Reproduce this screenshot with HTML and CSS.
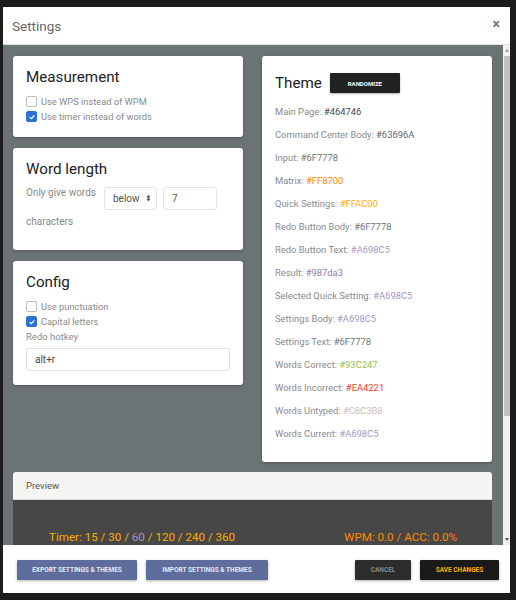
FILE: index.html
```html
<!DOCTYPE html>
<html>
<head>
<meta charset="utf-8">
<link rel="stylesheet" href="styles.css">
</head>
<body>
<div class="modal">
  <div class="header">
    <span class="title">Settings</span>
    <span class="close">×</span>
  </div>
  <div class="body-wrap">
    <div class="scroll">
      <div class="grid">
        <div class="col">
          <div class="card measure">
            <h2>Measurement</h2>
            <div class="check"><span class="box"></span>Use WPS instead of WPM</div>
            <div class="check"><span class="box on"><svg viewBox="0 0 10 10" width="8" height="8"><path d="M2 5.2 L4.2 7.2 L8 3" fill="none" stroke="#fff" stroke-width="1.5"/></svg></span>Use timer instead of words</div>
          </div>
          <div class="card wordlen">
            <h2>Word length</h2>
            <div class="wl-row">
              <span class="lbl">Only give words</span>
              <span class="select">below <span class="arrows">⬍</span></span>
              <span class="num">7</span>
            </div>
            <div class="lbl chars">characters</div>
          </div>
          <div class="card config">
            <h2>Config</h2>
            <div class="check"><span class="box"></span>Use punctuation</div>
            <div class="check"><span class="box on"><svg viewBox="0 0 10 10" width="8" height="8"><path d="M2 5.2 L4.2 7.2 L8 3" fill="none" stroke="#fff" stroke-width="1.5"/></svg></span>Capital letters</div>
            <div class="lbl hot">Redo hotkey</div>
            <div class="field">alt+r</div>
          </div>
        </div>
        <div class="col">
          <div class="card theme">
            <div class="theme-head">
              <h2>Theme</h2>
              <span class="rand">RANDOMIZE</span>
            </div>
            <div class="row">Main Page: <span style="color:#464746">#464746</span></div>
            <div class="row">Command Center Body: <span style="color:#63696A">#63696A</span></div>
            <div class="row">Input: <span style="color:#6F7778">#6F7778</span></div>
            <div class="row">Matrix: <span style="color:#FF8700">#FF8700</span></div>
            <div class="row">Quick Settings: <span style="color:#FFAC00">#FFAC00</span></div>
            <div class="row">Redo Button Body: <span style="color:#6F7778">#6F7778</span></div>
            <div class="row">Redo Button Text: <span style="color:#A698C5">#A698C5</span></div>
            <div class="row">Result: <span style="color:#987da3">#987da3</span></div>
            <div class="row">Selected Quick Setting: <span style="color:#A698C5">#A698C5</span></div>
            <div class="row">Settings Body: <span style="color:#A698C5">#A698C5</span></div>
            <div class="row">Settings Text: <span style="color:#6F7778">#6F7778</span></div>
            <div class="row">Words Correct: <span style="color:#93C247">#93C247</span></div>
            <div class="row">Words Incorrect: <span style="color:#EA4221">#EA4221</span></div>
            <div class="row">Words Untyped: <span style="color:#C8C3B8">#C8C3B8</span></div>
            <div class="row">Words Current: <span style="color:#A698C5">#A698C5</span></div>
          </div>
        </div>
      </div>
      <div class="preview">
        <div class="preview-head">Preview</div>
        <div class="preview-body">
          <span class="timer">Timer: 15 / 30 / <span class="sel">60</span> / 120 / 240 / 360</span>
          <span class="wpm">WPM: 0.0 / ACC: 0.0%</span>
        </div>
      </div>
    </div>
    <div class="scrollbar">
      <span class="arr up"></span>
      <span class="thumb"></span>
      <span class="arr down"></span>
    </div>
  </div>
  <div class="footer">
    <div class="group">
      <span class="btn blue w1">EXPORT SETTINGS &amp; THEMES</span>
      <span class="btn blue w2">IMPORT SETTINGS &amp; THEMES</span>
    </div>
    <div class="group">
      <span class="btn cancel">CANCEL</span>
      <span class="btn save">SAVE CHANGES</span>
    </div>
  </div>
</div>
</body>
</html>
```
FILE: styles.css
```css
* { box-sizing: border-box; }
html, body { height: 100%; }
body {
  margin: 0;
  background: #1c1c1c;
  padding: 7px 6px 0 3px;
  font-family: Roboto, "Liberation Sans", sans-serif;
  overflow: hidden;
}
.modal {
  width: 507px;
  height: 586px;
  background: #fff;
  display: flex;
  flex-direction: column;
}
.header {
  height: 38px;
  flex: none;
  display: flex;
  align-items: center;
  justify-content: space-between;
  padding: 1px 10px 0 9px;
  border-bottom: 1px solid #e2e2e2;
}
.title { font-size: 13.5px; color: #666; }
.close { font-size: 14px; color: #777; font-weight: bold; margin-top: -4px; }
.body-wrap {
  display: flex;
  height: 500px;
  flex: none;
}
.scroll {
  width: 500px;
  background: #6c7374;
  overflow: hidden;
  padding: 11px 11px 0 10px;
}
.grid {
  display: grid;
  grid-template-columns: 230px 230px;
  column-gap: 19px;
}
.col { display: flex; flex-direction: column; gap: 11px; }
.card {
  background: #fff;
  border-radius: 3px;
  box-shadow: 0 1px 3px rgba(0,0,0,0.25);
  padding: 11px 13px 13px 13px;
}
h2 {
  margin: 0;
  font-size: 15.2px;
  font-weight: 400;
  line-height: 20px;
  color: #222;
}
.check {
  display: flex;
  align-items: center;
  font-size: 9.3px;
  line-height: 15px;
  color: #8a8a8a;
}
.measure h2 { margin-bottom: 7px; }
.box {
  width: 11px;
  height: 11px;
  border: 1px solid #bbb;
  border-radius: 2px;
  margin-right: 4px;
  display: inline-flex;
  align-items: center;
  justify-content: center;
  background: #fff;
}
.box.on { background: #2b72d6; border-color: #2b72d6; }
.wordlen { height: 102px; padding-bottom: 0; }
.wordlen h2 { margin-bottom: 8px; }
.wl-row { display: flex; align-items: flex-start; }
.lbl { font-size: 10px; color: #8a8a8a; line-height: 12px; }
.wl-row .lbl { width: 78px; }
.select {
  width: 53px;
  height: 23px;
  border: 1px solid #e2e2e2;
  border-radius: 3px;
  font-size: 10px;
  color: #555;
  display: flex;
  align-items: center;
  padding-left: 8px;
}
.arrows { font-size: 8px; margin-left: 5px; }
.num {
  width: 54px;
  height: 23px;
  border: 1px solid #e2e2e2;
  border-radius: 3px;
  margin-left: 6px;
  font-size: 10px;
  color: #555;
  display: flex;
  align-items: center;
  padding-left: 8px;
}
.chars { margin-top: 6px; line-height: 12px; }
.config { padding-bottom: 14px; }
.config h2 { margin-bottom: 7px; }
.hot { line-height: 15px; font-size: 9.5px; }
.field {
  margin-top: 4px;
  height: 23px;
  border: 1px solid #e2e2e2;
  border-radius: 3px;
  font-size: 10px;
  color: #444;
  display: flex;
  align-items: center;
  padding-left: 8px;
}
.theme { height: 406px; padding-top: 17px; }
.theme-head { display: flex; align-items: center; margin-bottom: 7px; }
.theme-head h2 { margin-right: 8px; }
.rand {
  width: 70px;
  height: 20px;
  background: #222;
  color: #fff;
  font-size: 6px;
  font-weight: bold;
  display: flex;
  align-items: center;
  justify-content: center;
  box-shadow: 0 1px 2px rgba(0,0,0,0.3);
  border-radius: 1px;
}
.row {
  font-size: 9.4px;
  line-height: 23px;
  color: #8a8a8a;
}
.preview {
  margin-top: 10px;
  border-radius: 3px 3px 0 0;
  overflow: hidden;
}
.preview-head {
  height: 28px;
  background: #f5f5f4;
  font-size: 9.5px;
  color: #555;
  display: flex;
  align-items: center;
  padding-left: 13px;
  border-bottom: 1px solid #ddd;
}
.preview-body {
  height: 60px;
  background: #464746;
  display: flex;
  justify-content: space-between;
  padding: 30px 35px 0 36px;
  font-size: 11.6px;
  line-height: 14px;
}
.timer { color: #FFAC00; }
.timer .sel { color: #A698C5; }
.wpm { color: #FF8700; }
.scrollbar {
  width: 7px;
  background: #f1f1f1;
  display: flex;
  flex-direction: column;
  align-items: center;
  padding: 4px 0 4px 0;
}
.arr { width: 0; height: 0; border-left: 2px solid transparent; border-right: 2px solid transparent; }
.arr.up { border-bottom: 3px solid #999; }
.arr.down { border-top: 3px solid #555; margin-top: auto; }
.thumb { width: 6px; height: 360px; background: #c1c1c1; margin-top: 4px; }
.footer {
  flex: 1;
  display: flex;
  justify-content: space-between;
  align-items: flex-start;
  padding: 15px 11px 0 14px;
}
.group { display: flex; gap: 9px; }
.btn {
  height: 20px;
  display: flex;
  align-items: center;
  justify-content: center;
  font-size: 6.5px;
  font-weight: bold;
  box-shadow: 0 1px 3px rgba(0,0,0,0.3);
  border-radius: 1px;
}
.blue { background: #5f6d9d; color: #e6e8f0; }
.w1 { width: 120px; }
.w2 { width: 122px; }
.cancel { width: 56px; background: #2c2c2c; color: #888; }
.save { width: 79px; background: #1a1a1a; color: #FFAC00; }
```
